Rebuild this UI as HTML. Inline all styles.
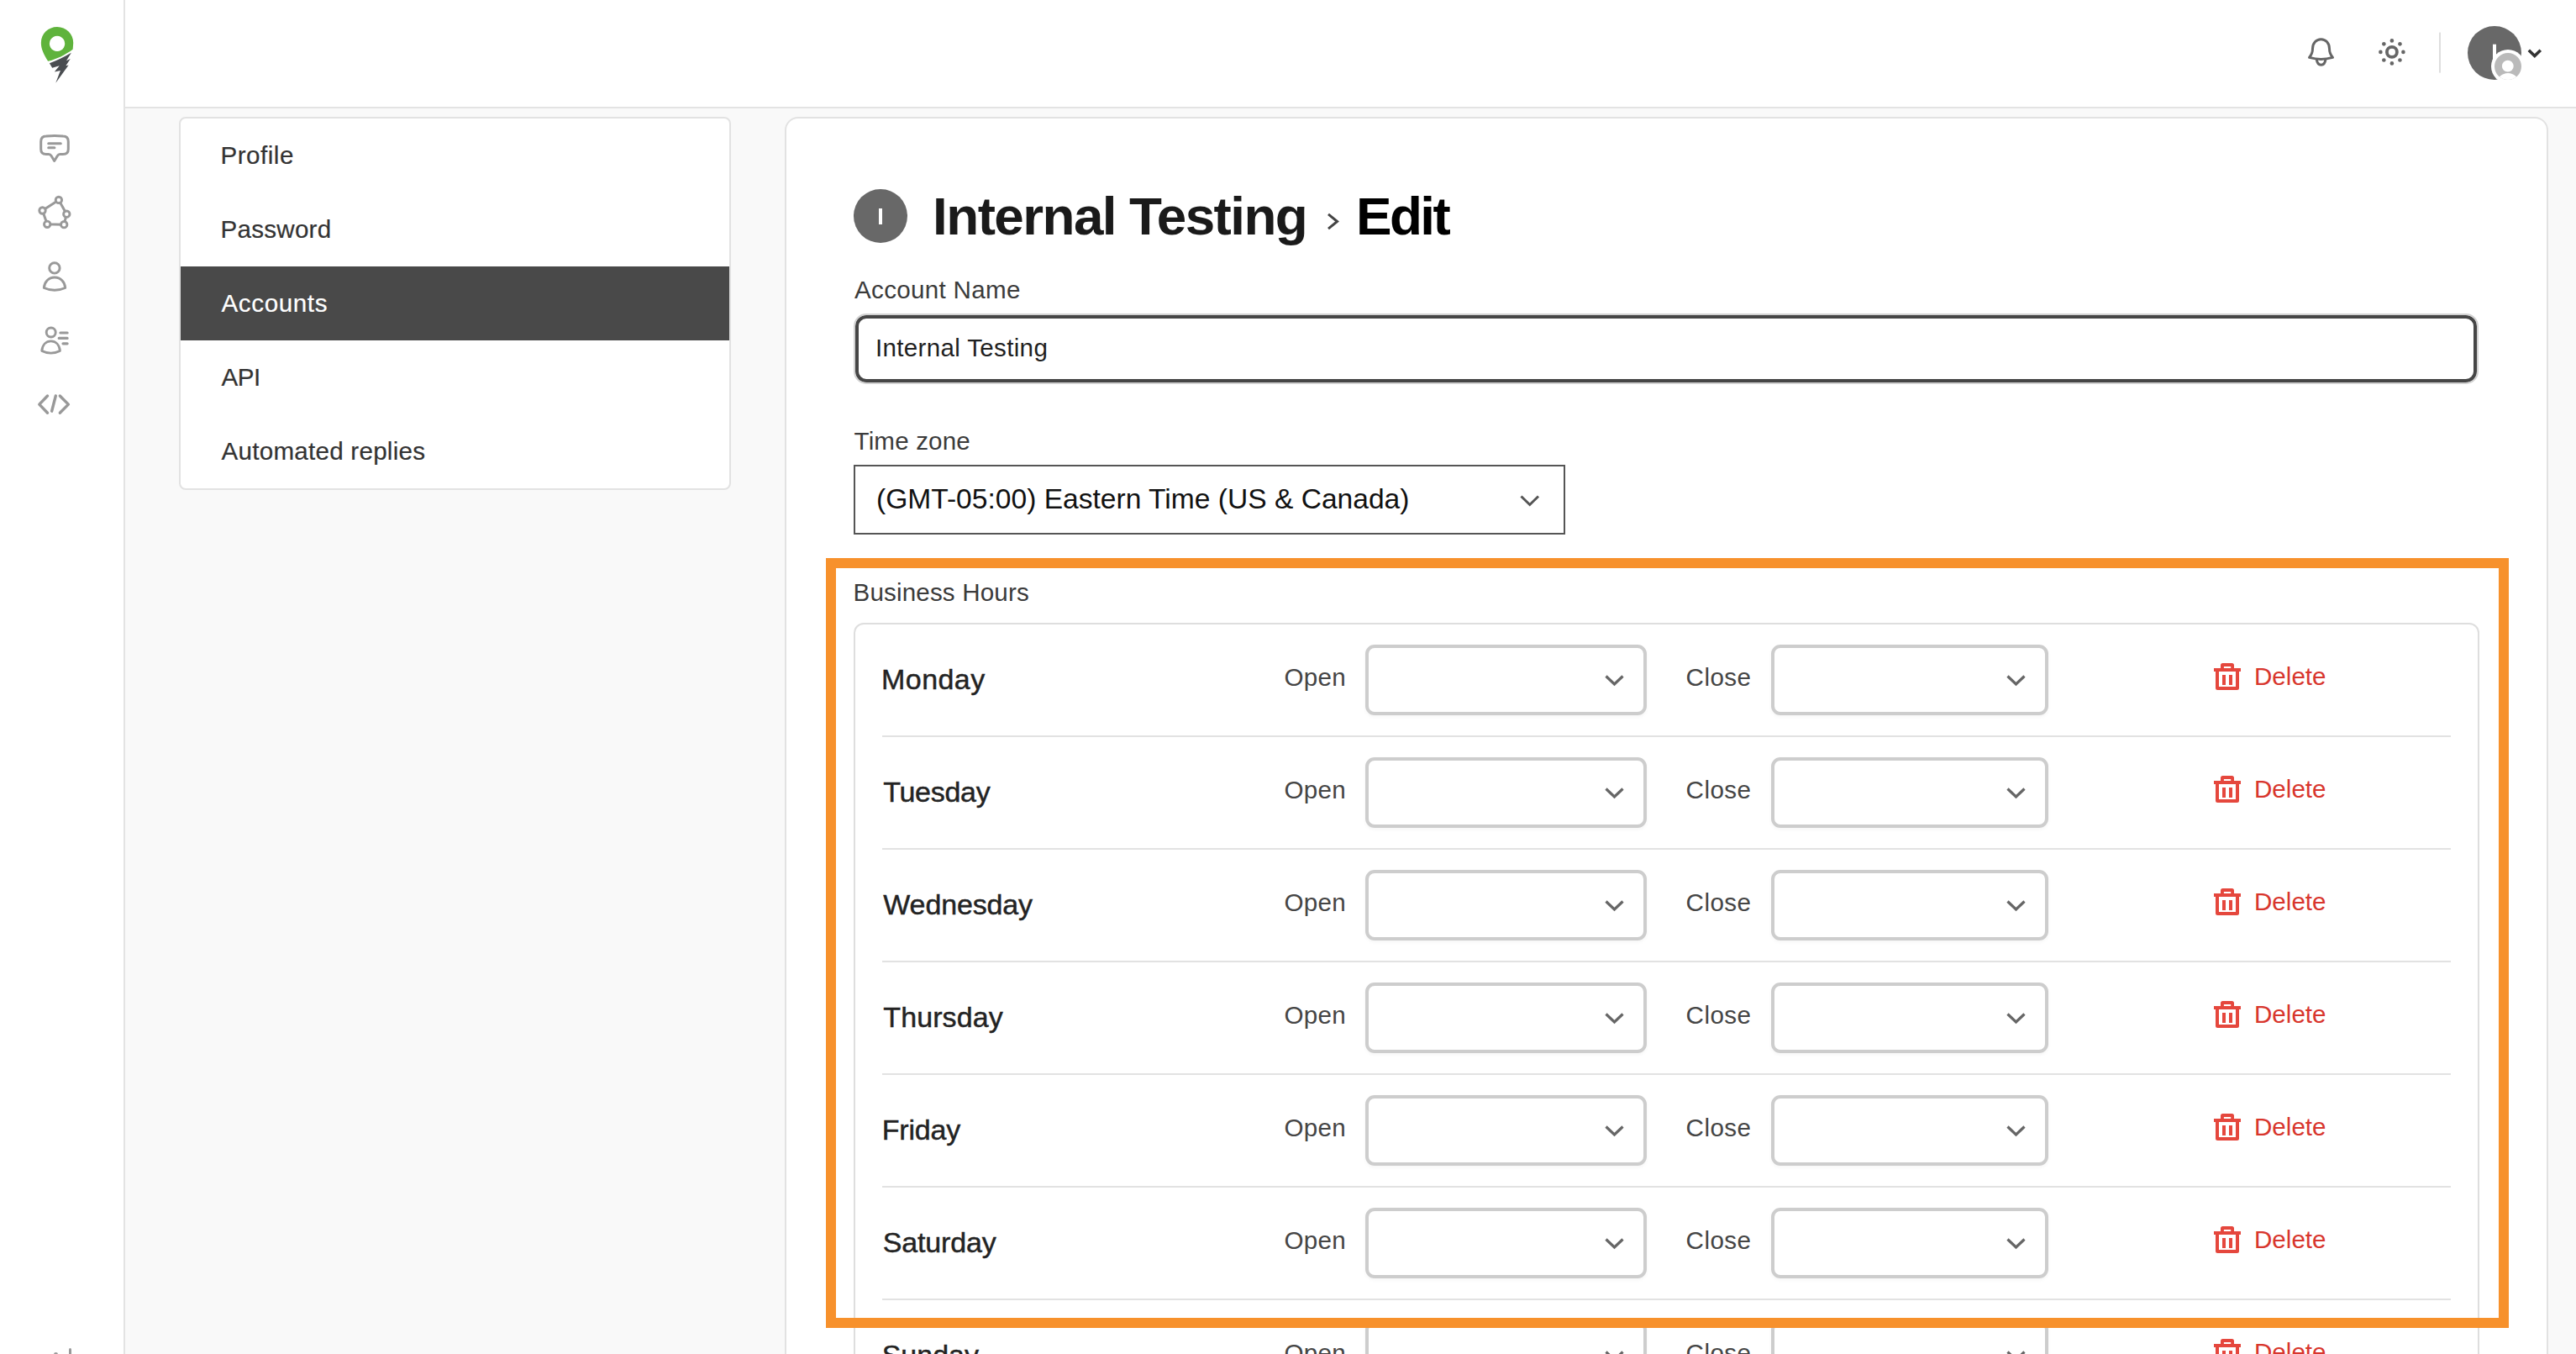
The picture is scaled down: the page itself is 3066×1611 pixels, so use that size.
<!DOCTYPE html>
<html>
<head>
<meta charset="utf-8">
<style>
html,body{margin:0;padding:0;}
body{width:3066px;height:1611px;overflow:hidden;position:relative;background:#f9f9f9;font-family:"Liberation Sans",sans-serif;}
.a{position:absolute;}
.t{position:absolute;line-height:1;white-space:nowrap;font-family:"Liberation Sans",sans-serif;}
#sidebar{left:0;top:0;width:147px;height:1611px;background:#fff;border-right:2px solid #e3e3e3;}
#header{left:149px;top:0;width:2917px;height:127px;background:#fff;border-bottom:2px solid #e3e3e3;}
#nav{left:213px;top:139px;width:653px;height:440px;background:#fff;border:2px solid #e2e2e2;border-radius:8px;overflow:hidden;}
.nav-t{font-size:29.6px;color:#333;-webkit-text-stroke:0.2px currentColor;}
#main{left:934px;top:139px;width:2095px;height:1600px;background:#fff;border:2px solid #e2e2e2;border-radius:16px;}
.lbl{font-size:29.6px;color:#3b3b3b;}
.day{font-size:34px;color:#232323;-webkit-text-stroke:0.45px #232323;}
.oc{font-size:29.6px;color:#454545;}
.del{font-size:29.6px;color:#d8362d;}
.sel{position:absolute;box-sizing:border-box;border:4px solid #cdcdcd;border-radius:11px;background:#fff;box-shadow:0 2px 4px rgba(0,0,0,0.04);}
.divl{position:absolute;left:1050px;width:1867px;height:2px;background:#e2e2e2;}
</style>
</head>
<body>
<!-- sidebar -->
<div id="sidebar" class="a"></div>
<div id="header" class="a"></div>

<!-- logo -->
<svg class="a" style="left:40px;top:25px" width="60" height="80" viewBox="0 0 1016 1354">
  <path fill="#5fb33c" fill-rule="evenodd" d="M290,810 C200,660 150,560 150,440 C150,255 300,120 475,120 C655,120 800,260 800,440 L790,570 C640,680 460,770 290,810 Z M475,300 A155,155 0 1 0 475.1,300 Z"/>
  <path fill="#4a4d51" d="M320,850 C480,790 620,720 760,640 L660,800 L740,760 L650,900 L705,890 L445,1250 L540,1000 L420,1025 L520,900 L375,945 Z"/>
</svg>
<!-- sidebar icons -->
<svg class="a" style="left:0;top:0" width="147" height="520" viewBox="0 0 147 520">
 <g fill="none" stroke="#999" stroke-width="3" stroke-linecap="round" stroke-linejoin="round">
  <path d="M55 162 Q65 161 75 162 Q81.3 162 81.3 168.5 V177.5 Q81.3 183.5 75 183.5 H71.5 Q69.5 183.5 68.3 185.5 L64.7 191.5 L61.1 185.5 Q59.9 183.5 57.9 183.5 H55 Q48.7 183.5 48.7 177.5 V168.5 Q48.7 162 55 162 Z"/>
  <path d="M57.7 170.7 H72.3 M57.7 175.8 H64.9"/>
  <path d="M69.9 237.9 L50.5 250.5 L56.2 266.8 L76.2 267.2 L79.3 254.7 Z"/>
 </g>
 <g fill="#fff" stroke="#999" stroke-width="2.9">
  <circle cx="69.9" cy="237.9" r="3.7"/><circle cx="50.5" cy="250.5" r="3.7"/><circle cx="79.3" cy="254.7" r="3.7"/><circle cx="56.2" cy="266.8" r="3.7"/><circle cx="76.2" cy="267.2" r="3.7"/>
 </g>
 <g fill="none" stroke="#999" stroke-width="2.9" stroke-linecap="round" stroke-linejoin="round">
  <circle cx="64.9" cy="318.9" r="6.2"/>
  <path d="M52.3 342.5 C53 335 58 330 65 330 C72 330 77 335 77.7 342.5 C73 344.6 69 345.3 65 345.3 C61 345.3 57 344.6 52.3 342.5 Z"/>
  <circle cx="60.7" cy="395.5" r="5.5"/>
  <path d="M49.8 417.5 C50.5 410 55 405.9 60.6 405.9 C66.2 405.9 70.7 410 71.4 417.5 C67.5 419.5 64 420.1 60.6 420.1 C57.2 420.1 53.7 419.5 49.8 417.5 Z"/>
  <path d="M71.9 396 H80.1 M70.2 402.4 H80.1 M75 408.8 H80.1" stroke-width="3.2"/>
  <path d="M56.5 471 L46.8 481.1 L56.5 491.2 M66.3 471 L61.6 489.2 M71.3 471 L81.4 481.1 L71.3 491.2" stroke-width="3.4"/>
 </g>
</svg>
<div class="a" style="left:63.5px;top:1608.5px;width:5px;height:5px;border-radius:50%;background:#999;"></div>
<div class="a" style="left:81.5px;top:1603.5px;width:3.5px;height:10px;border-radius:2px;background:#999;"></div>

<!-- header icons -->
<svg class="a" style="left:2700px;top:0" width="366" height="127" viewBox="2700 0 366 127">
 <g fill="none" stroke="#666" stroke-width="3" stroke-linecap="round" stroke-linejoin="round">
  <path d="M2752.5 58 C2752.5 51 2757 46.7 2762.5 46.7 C2768 46.7 2772.5 51 2772.5 58 C2772.5 63 2774 65.5 2776.5 68.4 C2770 70.2 2766 70.5 2762.5 70.5 C2759 70.5 2755 70.2 2748.5 68.4 C2751 65.5 2752.5 63 2752.5 58 Z"/>
  <path d="M2757.3 70.8 C2757.8 75 2760 77.2 2762.7 77.2 C2765.4 77.2 2767.4 75 2767.9 70.8"/>
  <circle cx="2846.9" cy="61.9" r="6" stroke-width="3.8"/>
 </g>
 <g fill="#666">
  <circle cx="2846.9" cy="48.4" r="2.3"/><circle cx="2846.9" cy="75.4" r="2.3"/><circle cx="2833.4" cy="61.9" r="2.3"/><circle cx="2860.4" cy="61.9" r="2.3"/>
  <circle cx="2837.35" cy="52.35" r="2.3"/><circle cx="2856.45" cy="52.35" r="2.3"/><circle cx="2837.35" cy="71.45" r="2.3"/><circle cx="2856.45" cy="71.45" r="2.3"/>
 </g>
 <rect x="2903" y="38.6" width="2" height="48" fill="#dedede"/>
 <defs><clipPath id="avc"><rect x="2937" y="31" width="64" height="64"/></clipPath><clipPath id="bdc"><circle cx="2985" cy="79" r="16"/></clipPath></defs>
 <circle cx="2969" cy="63" r="32" fill="#686868"/>
 <g clip-path="url(#avc)">
  <rect x="2967" y="52.7" width="4" height="22" fill="#fff"/>
  <circle cx="2985" cy="79" r="20" fill="#fff"/>
  <circle cx="2985" cy="79" r="16" fill="#bababa"/>
  <g clip-path="url(#bdc)"><circle cx="2984.8" cy="78.7" r="6.9" fill="#fff"/><ellipse cx="2985" cy="99" rx="13" ry="12" fill="#fff"/></g>
 </g>
 <polyline points="3009.8,59.8 3016.8,66.6 3023.8,59.8" fill="none" stroke="#333" stroke-width="3.6"/>
</svg>

<!-- nav card -->
<div id="nav" class="a">
  <div class="a" style="left:0;top:176px;width:653px;height:88px;background:#494949;"></div>
</div>
<div class="t nav-t" style="left:262.5px;top:170px;letter-spacing:0.5px;">Profile</div>
<div class="t nav-t" style="left:262.5px;top:258px;letter-spacing:0.25px;">Password</div>
<div class="t nav-t" style="left:263.5px;top:346px;letter-spacing:0.6px;color:#fff;">Accounts</div>
<div class="t nav-t" style="left:263.5px;top:434px;letter-spacing:-0.5px;">API</div>
<div class="t nav-t" style="left:263.5px;top:522px;letter-spacing:0.25px;">Automated replies</div>

<!-- main card -->
<div id="main" class="a"></div>

<!-- title -->
<div class="a" style="left:1016px;top:225px;width:64px;height:64px;border-radius:50%;background:#686868;"></div>
<div class="a" style="left:1046px;top:248px;width:4px;height:19.3px;background:#fff;"></div>
<div class="t" style="left:1110.1px;top:225.5px;font-size:63.8px;font-weight:700;color:#1a1a1a;letter-spacing:-1.57px;">Internal Testing</div>
<svg class="a" style="left:1570px;top:245px" width="34" height="36" viewBox="1570 245 34 36"><polyline points="1581,254.9 1591.6,263.5 1581,272.1" fill="none" stroke="#444" stroke-width="3"/></svg>
<div class="t" style="left:1614px;top:225.5px;font-size:63.8px;font-weight:700;color:#000;letter-spacing:-2.6px;">Edit</div>

<div class="t lbl" style="left:1017px;top:330.3px;letter-spacing:0.3px;">Account Name</div>
<div class="a" style="left:1016px;top:373px;width:1934px;height:84px;box-sizing:border-box;border:2px solid #d2d2d2;border-radius:15px;box-shadow:inset 0 0 0 4px #464646;background:#fff;"></div>
<div class="t" style="left:1041.9px;top:399.4px;font-size:29.6px;color:#1f1f1f;letter-spacing:0.32px;">Internal Testing</div>

<div class="t lbl" style="left:1016.5px;top:509.9px;letter-spacing:0.15px;">Time zone</div>
<div class="a" style="left:1016px;top:553px;width:847px;height:83px;box-sizing:border-box;border:2px solid #555;background:#fff;"></div>
<div class="t" style="left:1043px;top:577.4px;font-size:33.6px;color:#111;">(GMT-05:00) Eastern Time (US &amp; Canada)</div>
<svg class="a" style="left:1800px;top:580px" width="40" height="30" viewBox="1800 580 40 30"><polyline points="1810.5,590.5 1820.75,600.5 1831,590.5" fill="none" stroke="#555" stroke-width="3"/></svg>

<div class="t lbl" style="left:1015.5px;top:689.9px;letter-spacing:0.15px;">Business Hours</div>
<div class="a" style="left:1016px;top:741px;width:1935px;height:1000px;box-sizing:border-box;border:2px solid #dedede;border-radius:12px;background:#fff;"></div>
<div class="t day" style="left:1049px;top:790.9px;letter-spacing:0.45px;">Monday</div>
<div class="t oc" style="left:1528.4px;top:790.6px;letter-spacing:0.3px;">Open</div>
<div class="sel" style="left:1625px;top:767px;width:335px;height:84px;"><svg class="a" style="left:277.7px;top:28.5px" width="26" height="18" viewBox="0 0 26 18"><polyline points="4.5,4.5 14.5,14 24.5,4.5" fill="none" stroke="#666" stroke-width="3.2"/></svg></div>
<div class="t oc" style="left:2006.6px;top:790.6px;letter-spacing:0.45px;">Close</div>
<div class="sel" style="left:2108px;top:767px;width:330px;height:84px;"><svg class="a" style="left:273px;top:28.7px" width="26" height="18" viewBox="0 0 26 18"><polyline points="4.5,4.5 14.5,14 24.5,4.5" fill="none" stroke="#666" stroke-width="3.2"/></svg></div>
<svg class="a" style="left:2630px;top:784px" width="42" height="42" viewBox="2630 784 42 42"><g fill="#e5473d"><rect x="2635" y="795" width="32" height="4"/><path d="M2643 795 V791.5 Q2643 789 2645.5 789 H2656.5 Q2659 789 2659 791.5 V795 H2655.2 V793 H2646.9 V795 Z"/><path d="M2637 799 H2641 V817 H2661 V799 H2665 V818.5 Q2665 821 2662.5 821 H2639.5 Q2637 821 2637 818.5 Z"/><rect x="2645" y="803" width="4" height="12"/><rect x="2653" y="803" width="4" height="12"/></g></svg>
<div class="t del" style="left:2683px;top:790px;">Delete</div>
<div class="divl" style="top:875px;"></div>
<div class="t day" style="left:1051.3px;top:924.9px;letter-spacing:-0.3px;">Tuesday</div>
<div class="t oc" style="left:1528.4px;top:924.6px;letter-spacing:0.3px;">Open</div>
<div class="sel" style="left:1625px;top:901px;width:335px;height:84px;"><svg class="a" style="left:277.7px;top:28.5px" width="26" height="18" viewBox="0 0 26 18"><polyline points="4.5,4.5 14.5,14 24.5,4.5" fill="none" stroke="#666" stroke-width="3.2"/></svg></div>
<div class="t oc" style="left:2006.6px;top:924.6px;letter-spacing:0.45px;">Close</div>
<div class="sel" style="left:2108px;top:901px;width:330px;height:84px;"><svg class="a" style="left:273px;top:28.7px" width="26" height="18" viewBox="0 0 26 18"><polyline points="4.5,4.5 14.5,14 24.5,4.5" fill="none" stroke="#666" stroke-width="3.2"/></svg></div>
<svg class="a" style="left:2630px;top:918px" width="42" height="42" viewBox="2630 784 42 42"><g fill="#e5473d"><rect x="2635" y="795" width="32" height="4"/><path d="M2643 795 V791.5 Q2643 789 2645.5 789 H2656.5 Q2659 789 2659 791.5 V795 H2655.2 V793 H2646.9 V795 Z"/><path d="M2637 799 H2641 V817 H2661 V799 H2665 V818.5 Q2665 821 2662.5 821 H2639.5 Q2637 821 2637 818.5 Z"/><rect x="2645" y="803" width="4" height="12"/><rect x="2653" y="803" width="4" height="12"/></g></svg>
<div class="t del" style="left:2683px;top:924px;">Delete</div>
<div class="divl" style="top:1009px;"></div>
<div class="t day" style="left:1051.3px;top:1058.9px;letter-spacing:-0.15px;">Wednesday</div>
<div class="t oc" style="left:1528.4px;top:1058.6px;letter-spacing:0.3px;">Open</div>
<div class="sel" style="left:1625px;top:1035px;width:335px;height:84px;"><svg class="a" style="left:277.7px;top:28.5px" width="26" height="18" viewBox="0 0 26 18"><polyline points="4.5,4.5 14.5,14 24.5,4.5" fill="none" stroke="#666" stroke-width="3.2"/></svg></div>
<div class="t oc" style="left:2006.6px;top:1058.6px;letter-spacing:0.45px;">Close</div>
<div class="sel" style="left:2108px;top:1035px;width:330px;height:84px;"><svg class="a" style="left:273px;top:28.7px" width="26" height="18" viewBox="0 0 26 18"><polyline points="4.5,4.5 14.5,14 24.5,4.5" fill="none" stroke="#666" stroke-width="3.2"/></svg></div>
<svg class="a" style="left:2630px;top:1052px" width="42" height="42" viewBox="2630 784 42 42"><g fill="#e5473d"><rect x="2635" y="795" width="32" height="4"/><path d="M2643 795 V791.5 Q2643 789 2645.5 789 H2656.5 Q2659 789 2659 791.5 V795 H2655.2 V793 H2646.9 V795 Z"/><path d="M2637 799 H2641 V817 H2661 V799 H2665 V818.5 Q2665 821 2662.5 821 H2639.5 Q2637 821 2637 818.5 Z"/><rect x="2645" y="803" width="4" height="12"/><rect x="2653" y="803" width="4" height="12"/></g></svg>
<div class="t del" style="left:2683px;top:1058px;">Delete</div>
<div class="divl" style="top:1143px;"></div>
<div class="t day" style="left:1051.3px;top:1192.9px;letter-spacing:0.1px;">Thursday</div>
<div class="t oc" style="left:1528.4px;top:1192.6px;letter-spacing:0.3px;">Open</div>
<div class="sel" style="left:1625px;top:1169px;width:335px;height:84px;"><svg class="a" style="left:277.7px;top:28.5px" width="26" height="18" viewBox="0 0 26 18"><polyline points="4.5,4.5 14.5,14 24.5,4.5" fill="none" stroke="#666" stroke-width="3.2"/></svg></div>
<div class="t oc" style="left:2006.6px;top:1192.6px;letter-spacing:0.45px;">Close</div>
<div class="sel" style="left:2108px;top:1169px;width:330px;height:84px;"><svg class="a" style="left:273px;top:28.7px" width="26" height="18" viewBox="0 0 26 18"><polyline points="4.5,4.5 14.5,14 24.5,4.5" fill="none" stroke="#666" stroke-width="3.2"/></svg></div>
<svg class="a" style="left:2630px;top:1186px" width="42" height="42" viewBox="2630 784 42 42"><g fill="#e5473d"><rect x="2635" y="795" width="32" height="4"/><path d="M2643 795 V791.5 Q2643 789 2645.5 789 H2656.5 Q2659 789 2659 791.5 V795 H2655.2 V793 H2646.9 V795 Z"/><path d="M2637 799 H2641 V817 H2661 V799 H2665 V818.5 Q2665 821 2662.5 821 H2639.5 Q2637 821 2637 818.5 Z"/><rect x="2645" y="803" width="4" height="12"/><rect x="2653" y="803" width="4" height="12"/></g></svg>
<div class="t del" style="left:2683px;top:1192px;">Delete</div>
<div class="divl" style="top:1277px;"></div>
<div class="t day" style="left:1049.7px;top:1326.9px;letter-spacing:-0.2px;">Friday</div>
<div class="t oc" style="left:1528.4px;top:1326.6px;letter-spacing:0.3px;">Open</div>
<div class="sel" style="left:1625px;top:1303px;width:335px;height:84px;"><svg class="a" style="left:277.7px;top:28.5px" width="26" height="18" viewBox="0 0 26 18"><polyline points="4.5,4.5 14.5,14 24.5,4.5" fill="none" stroke="#666" stroke-width="3.2"/></svg></div>
<div class="t oc" style="left:2006.6px;top:1326.6px;letter-spacing:0.45px;">Close</div>
<div class="sel" style="left:2108px;top:1303px;width:330px;height:84px;"><svg class="a" style="left:273px;top:28.7px" width="26" height="18" viewBox="0 0 26 18"><polyline points="4.5,4.5 14.5,14 24.5,4.5" fill="none" stroke="#666" stroke-width="3.2"/></svg></div>
<svg class="a" style="left:2630px;top:1320px" width="42" height="42" viewBox="2630 784 42 42"><g fill="#e5473d"><rect x="2635" y="795" width="32" height="4"/><path d="M2643 795 V791.5 Q2643 789 2645.5 789 H2656.5 Q2659 789 2659 791.5 V795 H2655.2 V793 H2646.9 V795 Z"/><path d="M2637 799 H2641 V817 H2661 V799 H2665 V818.5 Q2665 821 2662.5 821 H2639.5 Q2637 821 2637 818.5 Z"/><rect x="2645" y="803" width="4" height="12"/><rect x="2653" y="803" width="4" height="12"/></g></svg>
<div class="t del" style="left:2683px;top:1326px;">Delete</div>
<div class="divl" style="top:1411px;"></div>
<div class="t day" style="left:1050.7px;top:1460.9px;letter-spacing:-0.15px;">Saturday</div>
<div class="t oc" style="left:1528.4px;top:1460.6px;letter-spacing:0.3px;">Open</div>
<div class="sel" style="left:1625px;top:1437px;width:335px;height:84px;"><svg class="a" style="left:277.7px;top:28.5px" width="26" height="18" viewBox="0 0 26 18"><polyline points="4.5,4.5 14.5,14 24.5,4.5" fill="none" stroke="#666" stroke-width="3.2"/></svg></div>
<div class="t oc" style="left:2006.6px;top:1460.6px;letter-spacing:0.45px;">Close</div>
<div class="sel" style="left:2108px;top:1437px;width:330px;height:84px;"><svg class="a" style="left:273px;top:28.7px" width="26" height="18" viewBox="0 0 26 18"><polyline points="4.5,4.5 14.5,14 24.5,4.5" fill="none" stroke="#666" stroke-width="3.2"/></svg></div>
<svg class="a" style="left:2630px;top:1454px" width="42" height="42" viewBox="2630 784 42 42"><g fill="#e5473d"><rect x="2635" y="795" width="32" height="4"/><path d="M2643 795 V791.5 Q2643 789 2645.5 789 H2656.5 Q2659 789 2659 791.5 V795 H2655.2 V793 H2646.9 V795 Z"/><path d="M2637 799 H2641 V817 H2661 V799 H2665 V818.5 Q2665 821 2662.5 821 H2639.5 Q2637 821 2637 818.5 Z"/><rect x="2645" y="803" width="4" height="12"/><rect x="2653" y="803" width="4" height="12"/></g></svg>
<div class="t del" style="left:2683px;top:1460px;">Delete</div>
<div class="divl" style="top:1545px;"></div>
<div class="t day" style="left:1049.7px;top:1594.9px;letter-spacing:0px;">Sunday</div>
<div class="t oc" style="left:1528.4px;top:1594.6px;letter-spacing:0.3px;">Open</div>
<div class="sel" style="left:1625px;top:1571px;width:335px;height:84px;"><svg class="a" style="left:277.7px;top:28.5px" width="26" height="18" viewBox="0 0 26 18"><polyline points="4.5,4.5 14.5,14 24.5,4.5" fill="none" stroke="#666" stroke-width="3.2"/></svg></div>
<div class="t oc" style="left:2006.6px;top:1594.6px;letter-spacing:0.45px;">Close</div>
<div class="sel" style="left:2108px;top:1571px;width:330px;height:84px;"><svg class="a" style="left:273px;top:28.7px" width="26" height="18" viewBox="0 0 26 18"><polyline points="4.5,4.5 14.5,14 24.5,4.5" fill="none" stroke="#666" stroke-width="3.2"/></svg></div>
<svg class="a" style="left:2630px;top:1588px" width="42" height="42" viewBox="2630 784 42 42"><g fill="#e5473d"><rect x="2635" y="795" width="32" height="4"/><path d="M2643 795 V791.5 Q2643 789 2645.5 789 H2656.5 Q2659 789 2659 791.5 V795 H2655.2 V793 H2646.9 V795 Z"/><path d="M2637 799 H2641 V817 H2661 V799 H2665 V818.5 Q2665 821 2662.5 821 H2639.5 Q2637 821 2637 818.5 Z"/><rect x="2645" y="803" width="4" height="12"/><rect x="2653" y="803" width="4" height="12"/></g></svg>
<div class="t del" style="left:2683px;top:1594px;">Delete</div>

<!-- orange highlight -->
<div class="a" style="left:983px;top:664px;width:2003px;height:916px;box-sizing:border-box;border:12px solid #f7912c;z-index:10;"></div>

</body>
</html>
